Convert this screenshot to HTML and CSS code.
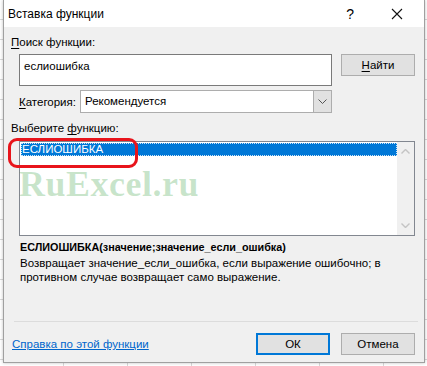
FILE: index.html
```html
<!DOCTYPE html>
<html lang="ru">
<head>
  <meta charset="UTF-8">
  <title>Вставка функции</title>
  <link rel="stylesheet" href="styles.css">
</head>
<body>
  <div class="dialog">
    <div class="titlebar">
      <span class="title">Вставка функции</span>
      <span class="help">?</span>
      <svg class="close" width="12" height="12" viewBox="0 0 12 12"><path d="M1 1L11 11M11 1L1 11" stroke="#111" stroke-width="1.1" fill="none"/></svg>
    </div>
    <div class="content">
      <div class="label"><u>П</u>оиск функции:</div>
      <div class="search-row">
        <div class="search-box">еслиошибка</div>
        <div class="btn"><u>Н</u>айти</div>
      </div>
      <div class="category-row">
        <span class="cat-label"><u>К</u>атегория:</span>
        <div class="select">
          <span class="select-value">Рекомендуется</span>
          <span class="select-arrow"><svg width="9" height="5" viewBox="0 0 9 5"><path d="M0.5 0.5L4.5 4.5L8.5 0.5" stroke="#555" fill="none"/></svg></span>
        </div>
      </div>
      <div class="label label-list">Выберите <u>ф</u>ункцию:</div>
      <div class="listbox">
        <div class="list-items">
          <div class="item selected">ЕСЛИОШИБКА</div>
        </div>
        <div class="scrollbar">
          <svg width="9" height="5" viewBox="0 0 9 5"><path d="M0.5 4.5L4.5 0.5L8.5 4.5" stroke="#c4c4c4" stroke-width="1.4" fill="none"/></svg>
          <svg width="9" height="5" viewBox="0 0 9 5"><path d="M0.5 0.5L4.5 4.5L8.5 0.5" stroke="#c4c4c4" stroke-width="1.4" fill="none"/></svg>
        </div>
      </div>
      <div class="signature">ЕСЛИОШИБКА(значение;значение_если_ошибка)</div>
      <div class="description">Возвращает значение_если_ошибка, если выражение ошибочно; в противном случае возвращает само выражение.</div>
      <div class="separator"></div>
      <div class="footer">
        <a class="help-link" href="#">Справка по этой функции</a>
        <div class="buttons">
          <div class="btn btn-default">ОК</div>
          <div class="btn">Отмена</div>
        </div>
      </div>
    </div>
    <div class="highlight"></div>
    <div class="watermark">RuExcel.ru</div>
  </div>
</body>
</html>
```

FILE: styles.css
```css
body {
  margin: 0;
  width: 427px;
  height: 366px;
  overflow: hidden;
  background-color: #fff;
  background-image:
    repeating-linear-gradient(to bottom, transparent 0, transparent 19px, #d9d9d9 19px, #d9d9d9 20px),
    repeating-linear-gradient(to right, transparent 0, transparent 63px, #d9d9d9 63px, #d9d9d9 64px);
  font-family: "Liberation Sans", Arial, sans-serif;
  font-size: 11.5px;
  color: #000;
}
u {
  text-decoration: underline;
  text-underline-offset: 2px;
}
.dialog {
  position: relative;
  margin-left: 3px;
  width: 420px;
  height: 362px;
  border: 1px solid #a0a0a0;
  border-top: none;
  background: #f0f0f0;
  box-shadow: 0 0 3px rgba(0, 0, 0, 0.25);
}
.titlebar {
  display: flex;
  align-items: center;
  height: 27px;
  background: #fff;
}
.title {
  flex: 1;
  padding-left: 4px;
  font-size: 12px;
}
.help {
  font-size: 14px;
  margin-right: 37px;
}
.close {
  margin-right: 21px;
}
.content {
  padding: 8px 6px 0 7px;
}
.label {
  line-height: 15px;
}
.search-row {
  display: flex;
  align-items: flex-start;
  margin-top: 4px;
  padding-left: 8px;
}
.search-box {
  border: 1px solid #7a7a7a;
  background: #fff;
  padding: 3px 0 0 4px;
  box-sizing: border-box;
  width: 313px;
  height: 32px;
  line-height: 16px;
}
.btn {
  width: 74px;
  height: 22px;
  box-sizing: border-box;
  border: 1px solid #adadad;
  background: #e1e1e1;
  text-align: center;
  line-height: 20px;
}
.search-row .btn {
  margin-left: 9px;
}
.category-row {
  display: flex;
  align-items: center;
  margin-top: 4px;
  padding-left: 8px;
}
.cat-label {
  width: 61px;
  white-space: nowrap;
}
.select {
  display: flex;
  width: 252px;
  height: 23px;
  box-sizing: border-box;
  border: 1px solid #adadad;
  background: #fff;
}
.select-value {
  flex: 1;
  padding-left: 4px;
  line-height: 21px;
}
.select-arrow {
  width: 17px;
  display: flex;
  align-items: center;
  justify-content: center;
  background: #e1e1e1;
  border-left: 1px solid #adadad;
}
.label-list {
  margin-top: 8px;
}
.listbox {
  display: flex;
  width: 396px;
  height: 95px;
  box-sizing: border-box;
  margin: 5px 0 0 8px;
  border: 1px solid #828790;
  background: #fff;
}
.list-items {
  flex: 1;
  padding: 1px 0 0 1px;
}
.item {
  height: 13px;
  line-height: 13px;
  padding-left: 1px;
}
.item.selected {
  background: #0078d7;
  color: #fff;
  outline: 1px dotted #cce4f7;
  outline-offset: -1px;
}
.scrollbar {
  width: 17px;
  background: #f0f0f0;
  display: flex;
  flex-direction: column;
  justify-content: space-between;
  align-items: center;
  padding: 7px 0 7px;
}
.signature {
  margin: 3px 0 0 9px;
  font-weight: bold;
  font-size: 10.8px;
  line-height: 16px;
}
.description {
  margin: 1px 0 0 9px;
  width: 370px;
  line-height: 14px;
}
.separator {
  margin: 37px 0 0 3px;
  width: 404px;
  border-top: 1px solid #dcdcdc;
}
.footer {
  display: flex;
  justify-content: space-between;
  align-items: center;
  margin-top: 11px;
}
.help-link {
  color: #0066cc;
  text-decoration: underline;
  margin-left: 1px;
}
.buttons {
  display: flex;
  gap: 11px;
  margin-right: 3px;
}
.btn-default {
  border: 2px solid #0078d7;
  line-height: 18px;
}
.highlight {
  position: absolute;
  left: 4px;
  top: 138px;
  width: 130px;
  height: 30px;
  box-sizing: border-box;
  border: 3px solid #e8141b;
  border-radius: 9px;
}
.watermark {
  position: absolute;
  left: 15px;
  top: 163px;
  font-family: "Liberation Serif", serif;
  font-weight: bold;
  font-size: 36px;
  color: rgba(60, 160, 70, 0.28);
  letter-spacing: 0.5px;
}
```
